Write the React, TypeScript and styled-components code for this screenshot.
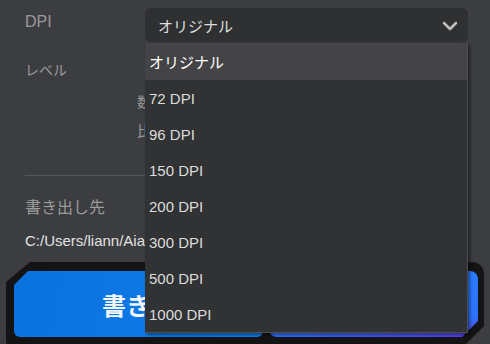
import React from 'react';
import styled, { createGlobalStyle } from 'styled-components';

const options = ['オリジナル', '72 DPI', '96 DPI', '150 DPI', '200 DPI', '300 DPI', '500 DPI', '1000 DPI'];

export default function App() {
  const selected = 0;

  return (
    <Page>
      <GlobalStyle />
      <Form>
        <Field>
          <Label>DPI</Label>
          <SelectWrap>
            <SelectBox>
              <SelectValue>{options[selected]}</SelectValue>
              <Chevron width="16" height="10" viewBox="0 0 16 10">
                <path d="M2 2 L8 8 L14 2" fill="none" stroke="#bdbdbd" strokeWidth="2.6" strokeLinecap="round" strokeLinejoin="round" />
              </Chevron>
            </SelectBox>
            <Menu>
              {options.map((opt, i) => (
                <MenuItem key={opt} active={i === selected}>{opt}</MenuItem>
              ))}
            </Menu>
          </SelectWrap>
        </Field>
        <LevelLabel>レベル</LevelLabel>
        <SubOptions>
          <SubOption>数値</SubOption>
          <SubOption>比率</SubOption>
        </SubOptions>
        <Divider />
        <SectionLabel>書き出し先</SectionLabel>
        <PathText>C:/Users/liann/AiaExports</PathText>
      </Form>
      <ActionBar>
        <PrimaryButton>書き出し</PrimaryButton>
        <SecondaryButton>共有</SecondaryButton>
      </ActionBar>
    </Page>
  );
}

const GlobalStyle = createGlobalStyle`
  html, body {
    margin: 0;
    padding: 0;
    background: #3c3d40;
    font-family: "Liberation Sans", "Noto Sans CJK JP", sans-serif;
  }
`;

const Page = styled.div`
  width: 490px;
  height: 344px;
  overflow: hidden;
  background: #3c3d40;
  display: flex;
  flex-direction: column;
`;

const Form = styled.div`
  padding: 8px 22px 0 25px;
  display: flex;
  flex-direction: column;
`;

const Field = styled.div`
  display: grid;
  grid-template-columns: 120px 1fr;
  height: 34px;
`;

const Label = styled.div`
  color: #9a9a9a;
  font-size: 16px;
  line-height: 20px;
  padding-top: 4px;
`;

const SelectWrap = styled.div`
  position: relative;
`;

const SelectBox = styled.div`
  height: 34px;
  border-radius: 6px;
  background: #2f3032;
  display: flex;
  align-items: center;
  justify-content: space-between;
  padding: 0 10px 0 13px;
`;

const SelectValue = styled.span`
  color: #dedede;
  font-size: 15px;
  padding-top: 1px;
`;

const Chevron = styled.svg`
  display: block;
  margin-top: 2px;
`;

const Menu = styled.div`
  position: absolute;
  top: 35px;
  left: 0;
  right: 0;
  background: #313234;
  border-right: 1px solid #4d4e50;
  border-bottom: 1px solid #4d4e50;
  box-shadow: 2px 2px 3px rgba(0, 0, 0, 0.45);
  z-index: 10;
`;

const MenuItem = styled.div<{ active?: boolean }>`
  height: 36px;
  display: flex;
  align-items: center;
  padding-left: 4px;
  font-size: 15px;
  color: ${({ active }) => (active ? '#ffffff' : '#dcdcdc')};
  background: ${({ active }) => (active ? '#444446' : 'transparent')};
  &:first-child {
    height: 37px;
  }
`;

const LevelLabel = styled.div`
  color: #9a9a9a;
  font-size: 14px;
  line-height: 20px;
  margin-top: 18px;
`;

const SubOptions = styled.div`
  display: flex;
  flex-direction: column;
  gap: 9px;
  margin-top: 12px;
  padding-left: 112px;
  width: 8px;
  overflow: hidden;
  white-space: nowrap;
`;

const SubOption = styled.div`
  color: #9a9a9a;
  font-size: 14px;
  line-height: 20px;
`;

const Divider = styled.div`
  height: 1px;
  background: #555659;
  margin-top: 34px;
`;

const SectionLabel = styled.div`
  color: #9a9a9a;
  font-size: 16px;
  line-height: 20px;
  margin-top: 22px;
`;

const PathText = styled.div`
  color: #e2e2e2;
  font-size: 15px;
  line-height: 20px;
  margin-top: 13px;
  max-width: 120px;
  overflow: hidden;
  white-space: nowrap;
`;

const ActionBar = styled.div`
  margin: 11px 6px 0 6px;
  height: 90px;
  flex-shrink: 0;
  background: #141414;
  border-radius: 12px;
  clip-path: polygon(24px 0, 100% 0, 100% calc(100% - 26px), calc(100% - 26px) 100%, 0 100%, 0 20px);
  padding: 9px 6px 0 8px;
  display: flex;
  align-items: flex-start;
  gap: 6px;
  box-sizing: border-box;
`;

const PrimaryButton = styled.div`
  width: 249px;
  height: 66px;
  border-radius: 6px;
  clip-path: polygon(14px 0, 100% 0, 100% 100%, 0 100%, 0 14px);
  background: linear-gradient(100deg, #0a72de 0%, #117ded 100%);
  color: #f4f6fa;
  font-size: 24px;
  font-weight: 700;
  display: flex;
  align-items: center;
  justify-content: center;
  padding-left: 23px;
  box-sizing: border-box;
`;

const SecondaryButton = styled.div`
  flex: 1;
  height: 66px;
  border-radius: 8px;
  clip-path: polygon(0 0, 100% 0, 100% calc(100% - 16px), calc(100% - 16px) 100%, 0 100%);
  background: linear-gradient(175deg, #2a7fff 0%, #2d74fb 75%, #5a3de6 100%);
  color: #ffffff;
  font-size: 24px;
  font-weight: 700;
  display: flex;
  align-items: center;
  justify-content: center;
`;
